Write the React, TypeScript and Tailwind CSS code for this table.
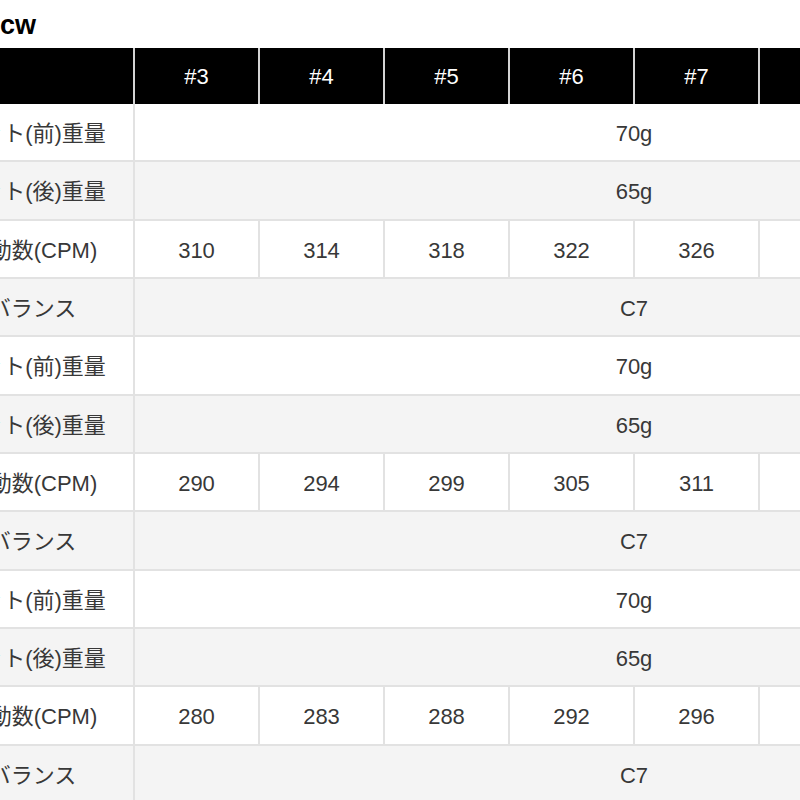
const heads = ["#3", "#4", "#5", "#6", "#7", "#8", "#9", "PW"]

const groups = [
  { before: "70g", after: "65g", cpm: [310, 314, 318, 322, 326, 330, 334, 338], balance: "C7" },
  { before: "70g", after: "65g", cpm: [290, 294, 299, 305, 311, 317, 323, 329], balance: "C7" },
  { before: "70g", after: "65g", cpm: [280, 283, 288, 292, 296, 300, 304, 308], balance: "C7" },
]

const cell = "flex items-center justify-center pt-[3px] border-r-2 border-b-2 border-[#e2e2e2] h-[58.33px]"

function Label({ text, gray }: { text: string; gray?: boolean }) {
  return <div className={`${cell} ${gray ? "bg-[#f4f4f4]" : "bg-white"}`}>{text}</div>
}

function Merged({ text, gray }: { text: string; gray?: boolean }) {
  return <div className={`${cell} col-span-8 ${gray ? "bg-[#f4f4f4]" : "bg-white"}`}>{text}</div>
}

export default function App() {
  return (
    <div
      className="w-[800px] h-[800px] overflow-hidden bg-white text-[#383838]"
      style={{ fontFamily: '"Liberation Sans", "Noto Sans CJK JP", sans-serif' }}
    >
      <div className="h-[48px] pt-[12px]">
        <h2 className="text-[27px] leading-[27px] font-bold text-black">cw</h2>
      </div>
      <div className="-ml-[68px] w-[1203px] grid grid-cols-[203px_repeat(8,125px)] text-[22px]">
        {/* header */}
        <div className="h-[56px] bg-black border-r-2 border-[#d4d4d4]" />
        {heads.map((h) => (
          <div key={h} className="h-[56px] bg-black text-white flex items-center justify-center border-r-2 border-[#d4d4d4]">
            {h}
          </div>
        ))}

        {groups.map((g, i) => (
          <div key={i} className="contents">
            <Label text="カット(前)重量" />
            <Merged text={g.before} />
            <Label text="カット(後)重量" gray />
            <Merged text={g.after} gray />
            <Label text="振動数(CPM)" />
            {g.cpm.map((v, j) => (
              <div key={j} className={`${cell} bg-white`}>
                {v}
              </div>
            ))}
            <Label text="バランス" gray />
            <Merged text={g.balance} gray />
          </div>
        ))}
      </div>
    </div>
  )
}
